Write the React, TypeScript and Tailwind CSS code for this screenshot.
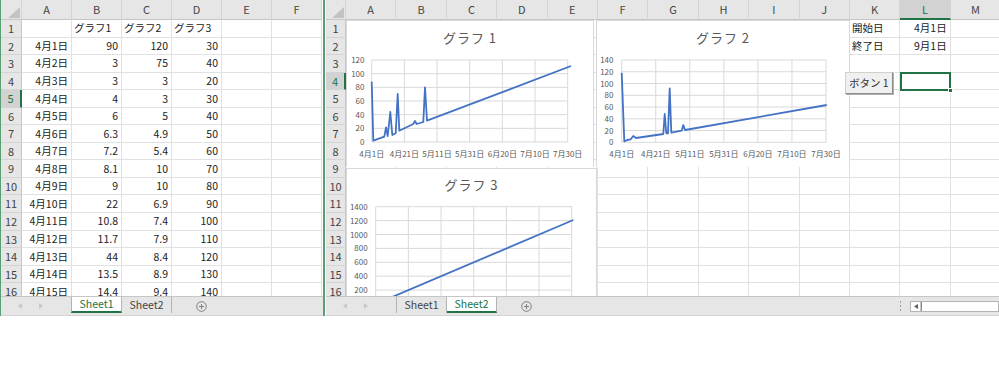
import React from 'react';

type Cell = { v: string; left?: boolean };

// Left sheet: dates and three series
const leftRows: Cell[][] = [
  [{ v: '' }, { v: 'グラフ1', left: true }, { v: 'グラフ2', left: true }, { v: 'グラフ3', left: true }],
  [{ v: '4月1日' }, { v: '90' }, { v: '120' }, { v: '30' }],
  [{ v: '4月2日' }, { v: '3' }, { v: '75' }, { v: '40' }],
  [{ v: '4月3日' }, { v: '3' }, { v: '3' }, { v: '20' }],
  [{ v: '4月4日' }, { v: '4' }, { v: '3' }, { v: '30' }],
  [{ v: '4月5日' }, { v: '6' }, { v: '5' }, { v: '40' }],
  [{ v: '4月6日' }, { v: '6.3' }, { v: '4.9' }, { v: '50' }],
  [{ v: '4月7日' }, { v: '7.2' }, { v: '5.4' }, { v: '60' }],
  [{ v: '4月8日' }, { v: '8.1' }, { v: '10' }, { v: '70' }],
  [{ v: '4月9日' }, { v: '9' }, { v: '10' }, { v: '80' }],
  [{ v: '4月10日' }, { v: '22' }, { v: '6.9' }, { v: '90' }],
  [{ v: '4月11日' }, { v: '10.8' }, { v: '7.4' }, { v: '100' }],
  [{ v: '4月12日' }, { v: '11.7' }, { v: '7.9' }, { v: '110' }],
  [{ v: '4月13日' }, { v: '44' }, { v: '8.4' }, { v: '120' }],
  [{ v: '4月14日' }, { v: '13.5' }, { v: '8.9' }, { v: '130' }],
  [{ v: '4月15日' }, { v: '14.4' }, { v: '9.4' }, { v: '140' }],
];

const blank: Cell[] = Array.from({ length: 10 }, () => ({ v: '' }));
const rightRows: Cell[][] = [
  [...blank, { v: '開始日', left: true }, { v: '4月1日' }],
  [...blank, { v: '終了日', left: true }, { v: '9月1日' }],
];

const xLabels = ['4月1日', '4月21日', '5月11日', '5月31日', '6月20日', '7月10日', '7月30日'];

function Corner({ w }: { w: string }) {
  return (
    <div className={`${w} shrink-0 relative bg-[#e6e6e6] border-r border-b border-r-[#d4d4d4] border-b-[#c6c6c6]`}>
      <svg className="absolute right-[1px] bottom-[1px]" width="12" height="11" viewBox="0 0 12 11">
        <polygon points="12,0 12,11 0,11" fill="#c3c3c3" />
      </svg>
    </div>
  );
}

function Grid({
  cols,
  rowHeadW,
  colW,
  rows,
  selRow,
  selCol,
}: {
  cols: string[];
  rowHeadW: string;
  colW: string;
  rows: Cell[][];
  selRow: number;
  selCol: number;
}) {
  return (
    <div className="flex flex-col">
      <div className="flex h-[20px] shrink-0">
        <Corner w={rowHeadW} />
        {cols.map((c, i) => (
          <div
            key={c}
            className={`${colW} shrink-0 flex items-center justify-center text-[11px] border-r border-r-[#d4d4d4] ${
              i === selCol
                ? 'bg-[#d2d2d2] text-[#217346] border-b-2 border-b-[#217346]'
                : 'bg-[#e6e6e6] text-[#444] border-b border-b-[#c6c6c6]'
            }`}
          >
            {c}
          </div>
        ))}
      </div>
      {Array.from({ length: 16 }).map((_, r) => (
        <div key={r} className="flex h-[17.55px] shrink-0">
          <div
            className={`${rowHeadW} shrink-0 flex items-center justify-center text-[11px] border-b border-b-[#d4d4d4] ${
              r === selRow
                ? 'bg-[#d2d2d2] text-[#217346] border-r-2 border-r-[#217346]'
                : 'bg-[#e6e6e6] text-[#444] border-r border-r-[#c6c6c6]'
            }`}
          >
            {r + 1}
          </div>
          {cols.map((c, i) => {
            const cell = rows[r]?.[i];
            return (
              <div
                key={c}
                className={`${colW} shrink-0 flex items-center border-r border-b border-[#e1e1e1] text-[10.5px] text-[#222] whitespace-nowrap ${
                  cell?.left ? 'justify-start pl-[2px]' : 'justify-end pr-[3px]'
                }`}
              >
                {cell?.v}
              </div>
            );
          })}
        </div>
      ))}
    </div>
  );
}

type ChartProps = {
  pos: string;
  w: number;
  h: number;
  title: string;
  titleY: number;
  l: number;
  r: number;
  t: number;
  b: number;
  max: number;
  step: number;
  labelX: number;
  xLabelY?: number;
  pts: [number, number][];
};

function Chart(p: ChartProps) {
  const ys = Array.from({ length: p.max / p.step + 1 }, (_, i) => i * p.step);
  const xs = Array.from({ length: 7 }, (_, i) => p.l + ((p.r - p.l) * i) / 6);
  return (
    <svg className={`absolute ${p.pos}`} width={p.w} height={p.h} viewBox={`0 0 ${p.w} ${p.h}`}>
      <rect x="0.5" y="0.5" width={p.w - 1} height={p.h + 10} fill="#fff" stroke="#d9d9d9" />
      <text x={p.w / 2} y={p.titleY} textAnchor="middle" fontSize="13" fill="#595959" letterSpacing="1">
        {p.title}
      </text>
      {ys.map((v) => {
        const y = p.b - ((p.b - p.t) * v) / p.max;
        return (
          <g key={v}>
            <line x1={p.l} x2={p.r} y1={y} y2={y} stroke="#d9d9d9" strokeWidth="1" />
            {y + 3 < p.h && (
              <text x={p.labelX} y={y + 3} textAnchor="end" fontSize="8" fill="#595959">
                {v}
              </text>
            )}
          </g>
        );
      })}
      {xs.map((x, i) => (
        <g key={i}>
          <line x1={x} x2={x} y1={p.t} y2={p.b} stroke="#d9d9d9" strokeWidth="1" />
          {p.xLabelY !== undefined && (
            <text x={x} y={p.xLabelY} textAnchor="middle" fontSize="8" fill="#595959">
              {xLabels[i]}
            </text>
          )}
        </g>
      ))}
      <polyline
        points={p.pts.map((q) => q.join(',')).join(' ')}
        fill="none"
        stroke="#4472c4"
        strokeWidth="1.8"
        strokeLinejoin="round"
      />
    </svg>
  );
}

function Arrow({ dir }: { dir: 'l' | 'r' }) {
  return (
    <svg width="5" height="6" viewBox="0 0 5 6">
      <polygon points={dir === 'l' ? '4,0 4,6 0,3' : '1,0 1,6 5,3'} fill="#c8c8c8" />
    </svg>
  );
}

function PlusCircle() {
  return (
    <svg width="11" height="11" viewBox="0 0 11 11">
      <circle cx="5.5" cy="5.5" r="4.8" fill="none" stroke="#808080" strokeWidth="1" />
      <line x1="3" x2="8" y1="5.5" y2="5.5" stroke="#808080" strokeWidth="1" />
      <line x1="5.5" x2="5.5" y1="3" y2="8" stroke="#808080" strokeWidth="1" />
    </svg>
  );
}

function Tab({ label, active, first }: { label: string; active?: boolean; first?: boolean }) {
  return (
    <div
      className={`h-full flex items-center justify-center text-[10.5px] border-r border-r-[#b4b4b4] ${first ? 'w-[51px] border-l border-l-[#b4b4b4]' : 'w-[50px]'} ${
        active ? 'bg-white text-[#217346] border-b-2 border-b-[#217346]' : 'text-[#444]'
      }`}
    >
      {label}
    </div>
  );
}

function TabBar({ active, scroll }: { active: 1 | 2; scroll?: boolean }) {
  return (
    <div className="h-[20px] shrink-0 flex items-stretch bg-[#e6e6e6] border-t border-t-[#c6c6c6] border-b border-b-[#d4d4d4]">
      <div className="w-[70px] shrink-0 flex items-center pl-[17px] gap-[15px]">
        <Arrow dir="l" />
        <Arrow dir="r" />
      </div>
      <div className="flex items-stretch pb-[2px]">
        <Tab label="Sheet1" active={active === 1} first />
        <Tab label="Sheet2" active={active === 2} />
      </div>
      <div className="flex items-center ml-[24px]">
        <PlusCircle />
      </div>
      {scroll && (
        <div className="ml-auto flex items-center">
          <div className="flex flex-col gap-[2px] mr-[9px]">
            <div className="w-[1px] h-[2px] bg-[#a0a0a0]" />
            <div className="w-[1px] h-[2px] bg-[#a0a0a0]" />
            <div className="w-[1px] h-[2px] bg-[#a0a0a0]" />
          </div>
          <div className="w-[89px] h-[11px] flex bg-white border border-[#b4b4b4]">
            <div className="w-[10px] flex items-center justify-center border-r border-r-[#c8c8c8]">
              <svg width="4" height="5" viewBox="0 0 4 5">
                <polygon points="4,0 4,5 0,2.5" fill="#606060" />
              </svg>
            </div>
            <div className="flex-1 border-l border-l-[#8a8a8a]" />
          </div>
        </div>
      )}
    </div>
  );
}

export default function App() {
  return (
    <div className="w-[999px] h-[367px] bg-white flex items-start font-['Noto_Sans_CJK_JP',sans-serif] overflow-hidden">
      {/* Left window: Sheet1 data */}
      <div className="w-[325px] h-[316px] shrink-0 flex flex-col border-l border-l-[#5a9e74] border-r-2 border-r-[#5a9e74] overflow-hidden">
        <div className="h-[276px] grow overflow-hidden">
          <Grid
            cols={['A', 'B', 'C', 'D', 'E', 'F']}
            rowHeadW="w-[21px]"
            colW="w-[50px]"
            rows={leftRows}
            selRow={4}
            selCol={-1}
          />
        </div>
        <TabBar active={1} />
      </div>

      {/* Right window: Sheet2 charts */}
      <div className="w-[673px] h-[316px] ml-[1px] shrink-0 flex flex-col overflow-hidden">
        <div className="relative h-[276px] grow overflow-hidden">
          <Grid
            cols={['A', 'B', 'C', 'D', 'E', 'F', 'G', 'H', 'I', 'J', 'K', 'L', 'M']}
            rowHeadW="w-[20px]"
            colW="w-[50.4px]"
            rows={rightRows}
            selRow={3}
            selCol={11}
          />
          <Chart
            pos="left-[20px] top-[20px]"
            w={248}
            h={147}
            title="グラフ 1"
            titleY={23}
            l={25.7}
            r={221.7}
            t={40}
            b={122}
            max={120}
            step={20}
            labelX={18.5}
            xLabelY={137}
            pts={[
              [25.7, 61.7], [27.3, 120.7], [38.3, 116.7], [40, 107.3], [41.7, 116], [44.3, 92],
              [46.3, 115], [49.7, 113.3], [51.7, 74], [53.3, 110.7], [67.3, 104], [69, 101],
              [70.7, 104], [77.3, 102], [79, 67.3], [81, 100.7], [225, 46],
            ]}
          />
          <Chart
            pos="left-[270px] top-[20px]"
            w={254}
            h={147}
            title="グラフ 2"
            titleY={23}
            l={25.7}
            r={230}
            t={40}
            b={122.3}
            max={140}
            step={20}
            labelX={17.5}
            xLabelY={137}
            pts={[
              [25.7, 52.7], [28.3, 121.3], [31.3, 120], [34.7, 119.3], [37.3, 116], [40, 118],
              [67.3, 114], [68.7, 94], [70.3, 113.3], [72, 113.3], [73.7, 68.3], [75.3, 112.7],
              [85.7, 110.7], [87.3, 105], [89, 110], [230.7, 85],
            ]}
          />
          {/* Chart 3 runs past the visible rows; only the part above the tab bar is drawn */}
          <Chart
            pos="left-[20px] top-[168px]"
            w={251}
            h={128}
            title="グラフ 3"
            titleY={22}
            l={29.7}
            r={225.7}
            t={38.7}
            b={136}
            max={1400}
            step={200}
            labelX={21.7}
            pts={[
              [29.7, 136], [227.3, 52],
            ]}
          />
          {/* Form button */}
          <button className="absolute left-[519px] top-[72px] w-[48px] h-[22px] flex items-center pl-[3px] text-[10.5px] text-[#333] bg-[#f0f0f0] border border-[#d0d0d0] border-b-[#8c8c8c] border-r-[#8c8c8c] shadow-[1px_1px_0_#b0b0b0] whitespace-nowrap">
            ボタン 1
          </button>
          {/* Active cell L4 */}
          <div className="absolute left-[574px] top-[72px] w-[51px] h-[19px] border-2 border-[#217346]">
            <div className="absolute -right-[4px] -bottom-[4px] w-[5px] h-[5px] bg-[#217346] border border-white" />
          </div>
        </div>
        <TabBar active={2} scroll />
      </div>
    </div>
  );
}
